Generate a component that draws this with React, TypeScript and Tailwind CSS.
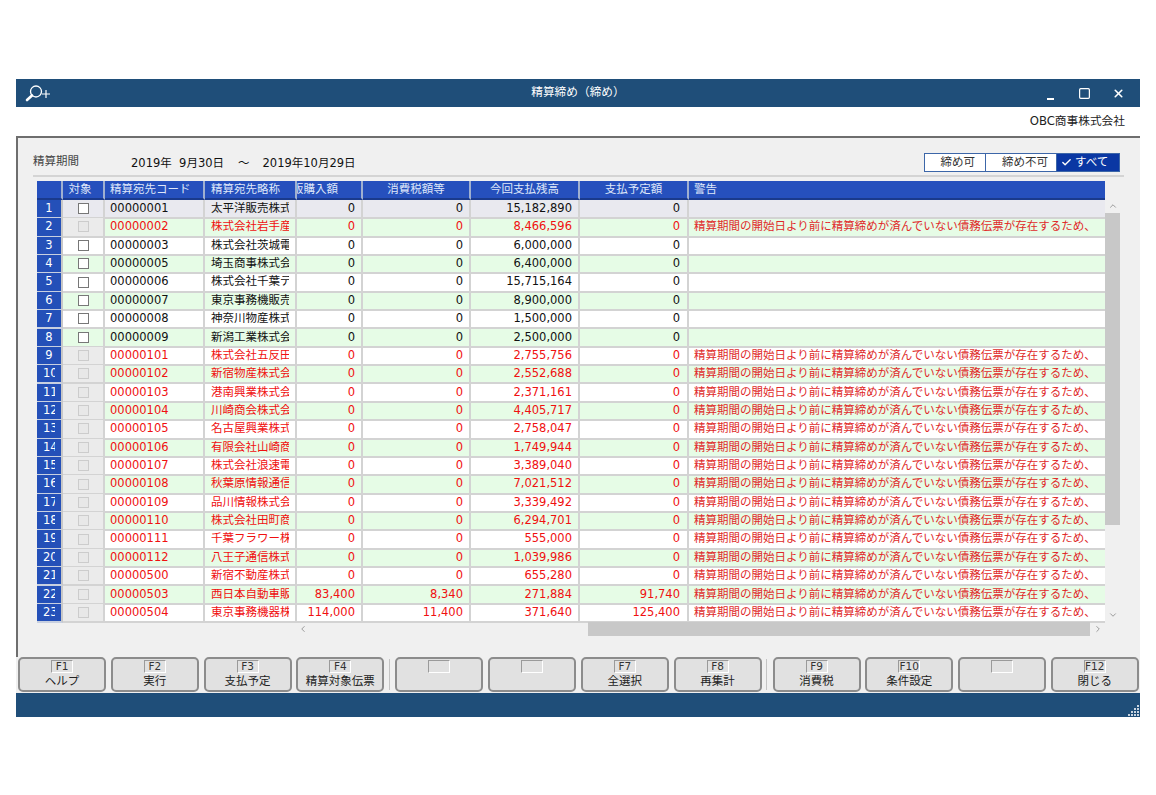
import { Check, ChevronDown, ChevronLeft, ChevronRight, ChevronUp, Square, X } from "lucide-react";

const warning = "精算期間の開始日より前に精算締めが済んでいない債務伝票が存在するため、";

const rows = [
  { code: "00000001", name: "太平洋販売株式会社", buy: "0", tax: "0", balance: "15,182,890", plan: "0", locked: false },
  { code: "00000002", name: "株式会社岩手産業", buy: "0", tax: "0", balance: "8,466,596", plan: "0", locked: true },
  { code: "00000003", name: "株式会社茨城電機", buy: "0", tax: "0", balance: "6,000,000", plan: "0", locked: false },
  { code: "00000005", name: "埼玉商事株式会社", buy: "0", tax: "0", balance: "6,400,000", plan: "0", locked: false },
  { code: "00000006", name: "株式会社千葉テック", buy: "0", tax: "0", balance: "15,715,164", plan: "0", locked: false },
  { code: "00000007", name: "東京事務機販売株式", buy: "0", tax: "0", balance: "8,900,000", plan: "0", locked: false },
  { code: "00000008", name: "神奈川物産株式会社", buy: "0", tax: "0", balance: "1,500,000", plan: "0", locked: false },
  { code: "00000009", name: "新潟工業株式会社", buy: "0", tax: "0", balance: "2,500,000", plan: "0", locked: false },
  { code: "00000101", name: "株式会社五反田商事", buy: "0", tax: "0", balance: "2,755,756", plan: "0", locked: true },
  { code: "00000102", name: "新宿物産株式会社", buy: "0", tax: "0", balance: "2,552,688", plan: "0", locked: true },
  { code: "00000103", name: "港南興業株式会社", buy: "0", tax: "0", balance: "2,371,161", plan: "0", locked: true },
  { code: "00000104", name: "川崎商会株式会社", buy: "0", tax: "0", balance: "4,405,717", plan: "0", locked: true },
  { code: "00000105", name: "名古屋興業株式会社", buy: "0", tax: "0", balance: "2,758,047", plan: "0", locked: true },
  { code: "00000106", name: "有限会社山崎商店", buy: "0", tax: "0", balance: "1,749,944", plan: "0", locked: true },
  { code: "00000107", name: "株式会社浪速電機", buy: "0", tax: "0", balance: "3,389,040", plan: "0", locked: true },
  { code: "00000108", name: "秋葉原情報通信株式", buy: "0", tax: "0", balance: "7,021,512", plan: "0", locked: true },
  { code: "00000109", name: "品川情報株式会社", buy: "0", tax: "0", balance: "3,339,492", plan: "0", locked: true },
  { code: "00000110", name: "株式会社田町商事", buy: "0", tax: "0", balance: "6,294,701", plan: "0", locked: true },
  { code: "00000111", name: "千葉フラワー株式会社", buy: "0", tax: "0", balance: "555,000", plan: "0", locked: true },
  { code: "00000112", name: "八王子通信株式会社", buy: "0", tax: "0", balance: "1,039,986", plan: "0", locked: true },
  { code: "00000500", name: "新宿不動産株式会社", buy: "0", tax: "0", balance: "655,280", plan: "0", locked: true },
  { code: "00000503", name: "西日本自動車販売株式", buy: "83,400", tax: "8,340", balance: "271,884", plan: "91,740", locked: true },
  { code: "00000504", name: "東京事務機器株式会社", buy: "114,000", tax: "11,400", balance: "371,640", plan: "125,400", locked: true },
];

const keyGroups = [
  [
    { key: "F1", label: "ヘルプ" },
    { key: "F2", label: "実行" },
    { key: "F3", label: "支払予定" },
    { key: "F4", label: "精算対象伝票" },
  ],
  [
    { key: "", label: "" },
    { key: "", label: "" },
    { key: "F7", label: "全選択" },
    { key: "F8", label: "再集計" },
  ],
  [
    { key: "F9", label: "消費税" },
    { key: "F10", label: "条件設定" },
    { key: "", label: "" },
    { key: "F12", label: "閉じる" },
  ],
];

const gridCols = "grid grid-cols-[26px_42px_100px_92px_66px_108px_109px_109px_416px]";
const cell = "flex items-center overflow-hidden whitespace-nowrap border-r-2 border-b-2 border-[#d3d3d3]";
const headCell = "flex items-center overflow-hidden whitespace-nowrap border-r-2 border-b-2 border-r-[#9fb0d0] border-b-[#1a3a8c]";

function FunctionKey({ k, label }: { k: string; label: string }) {
  return (
    <button className="flex h-[35px] w-[88px] flex-col items-center rounded-[5px] border-2 border-[#8c8c8c] bg-[#e1e1e1] pt-[1px]">
      <span className="flex h-[13px] w-[22px] items-center justify-center border-t border-l border-t-[#9a9a9a] border-l-[#9a9a9a] border-r border-b border-r-white border-b-white text-[10.5px] leading-none text-[#333]">
        {k}
      </span>
      <span className="mt-[1px] text-[11.5px] leading-[14px] text-[#222]">{label}</span>
    </button>
  );
}

export default function App() {
  return (
    <div
      className="h-[795px] w-[1156px] overflow-hidden bg-white pt-[79px] pl-[16px] text-[11.5px] text-black"
      style={{ fontFamily: '"DejaVu Sans", "Noto Sans CJK JP", sans-serif' }}
    >
      <div className="flex h-[638px] w-[1124px] flex-col">
        {/* Title bar */}
        <div className="flex h-[28px] items-center bg-[#1f4e79] text-white">
          <div className="flex w-[100px] pl-[8px]">
            <svg width="28" height="18" viewBox="0 0 28 18" fill="none" stroke="#ffffff">
              <circle cx="12" cy="7.5" r="5.5" strokeWidth="1.3" />
              <path d="M8 11.5 L3 16" strokeWidth="2.6" strokeLinecap="round" />
              <path d="M18 10 H26 M22 6 V14" strokeWidth="1.2" />
            </svg>
          </div>
          <div className="flex-1 text-center text-[11.7px]">精算締め（締め）</div>
          <div className="flex w-[100px] items-center justify-end gap-[21px] pr-[15px]">
            <span className="flex h-[13px] w-[13px] items-end justify-center">
              <span className="h-[2px] w-[7px] bg-white" />
            </span>
            <Square className="h-[13px] w-[13px]" strokeWidth={2.2} />
            <X className="h-[13px] w-[13px]" strokeWidth={3} />
          </div>
        </div>

        {/* Company strip */}
        <div className="flex h-[31px] items-center justify-end border-b-2 border-[#6e6e6e] pr-[15px] text-[11.7px] text-[#222]">
          OBC商事株式会社
        </div>

        {/* Body */}
        <div className="flex h-[519px] flex-col border-l-2 border-[#6e6e6e] bg-[#f0f0f0]">
          <div className="ml-[15px] mr-[16px] mt-[13px] flex h-[26px] items-start border-b-2 border-[#d4d4d4]">
            <span className="mt-[2px] w-[98px] text-[11.5px] text-[#444]">精算期間</span>
            <span className="mt-[4px] flex whitespace-pre text-[11.5px] text-[#111]">
              <span>2019年  9月30日</span>
              <span className="ml-[14px]">～</span>
              <span className="ml-[13px]">2019年10月29日</span>
            </span>
            <div className="ml-auto mt-[2px] mr-[4px] flex h-[18.5px] w-[196px] border border-[#3c66a8] bg-white text-[11.5px] text-[#333]">
              <span className="flex w-[61px] items-center justify-end border-r border-[#3c66a8] pr-[10px]">締め可</span>
              <span className="flex w-[71px] items-center justify-end border-r border-[#3c66a8] pr-[8px]">締め不可</span>
              <span className="flex flex-1 items-center gap-[3px] bg-[#0a37a3] pl-[4px] text-white">
                <Check className="h-[11px] w-[11px]" strokeWidth={3} />
                すべて
              </span>
            </div>
          </div>

          <div className="ml-[19px] mt-[4px] flex">
            {/* Grid */}
            <div className="w-[1068px]">
              <div className={`${gridCols} h-[19px] bg-[#2650bd] text-[#dfe7fa]`}>
                <div className={headCell} />
                <div className={`${headCell} justify-center pr-[6px]`}>対象</div>
                <div className={`${headCell} pl-[5px]`}>精算宛先コード</div>
                <div className={`${headCell} pl-[6px]`}>精算宛先略称</div>
                <div className={`${headCell} justify-end pr-[23px]`}>今回販購入額</div>
                <div className={`${headCell} justify-center`}>消費税額等</div>
                <div className={`${headCell} justify-center`}>今回支払残高</div>
                <div className={`${headCell} justify-center`}>支払予定額</div>
                <div className="flex items-center border-b-2 border-b-[#1a3a8c] pl-[5px]">警告</div>
              </div>
              {rows.map((row, i) => {
                const bg = i === 0 ? "bg-[#e9e9ef]" : i % 2 === 1 ? "bg-[#e6fce6]" : "bg-white";
                const color = row.locked ? "text-[#f01010]" : "text-[#111]";
                return (
                  <div key={row.code} className={`${gridCols} h-[18.36px] ${bg} ${color}`}>
                    <div className="flex items-center justify-center border-r-2 border-b-2 border-r-[#c8c8c8] border-b-[#c8d0e0] bg-[#2450b8] text-white">
                      <span className="inline-block w-[12px] overflow-hidden whitespace-nowrap text-center">{i + 1}</span>
                    </div>
                    <div className={`${cell} justify-center ${row.locked ? "bg-[#ebebeb]" : ""}`}>
                      <span className={`h-[11px] w-[11px] border ${row.locked ? "border-[#cccccc] bg-[#e8e8e8]" : "border-[#777777] bg-white"}`} />
                    </div>
                    <div className={`${cell} pl-[5px]`}>{row.code}</div>
                    <div className={`${cell} pl-[6px]`}>
                      <span className="block w-[78px] overflow-hidden">{row.name}</span>
                    </div>
                    <div className={`${cell} justify-end pr-[6px]`}>{row.buy}</div>
                    <div className={`${cell} justify-end pr-[6px]`}>{row.tax}</div>
                    <div className={`${cell} justify-end pr-[6px]`}>{row.balance}</div>
                    <div className={`${cell} justify-end pr-[7px]`}>{row.plan}</div>
                    <div className="flex items-center overflow-hidden whitespace-nowrap border-b-2 border-[#d3d3d3] pl-[5px] text-[#e02a2a]">
                      {row.locked ? warning : ""}
                    </div>
                  </div>
                );
              })}
            </div>

            {/* Vertical scrollbar */}
            <div className="flex w-[15px] flex-col items-center pt-[20px]">
              <ChevronUp className="h-[10px] w-[10px] text-[#8a8a8a]" />
              <div className="mt-[2px] h-[312px] w-full bg-[#c8c8c8]" />
              <ChevronDown className="mt-[85px] h-[10px] w-[10px] text-[#8a8a8a]" />
            </div>
          </div>

          {/* Horizontal scrollbar */}
          <div className="ml-[280px] flex h-[14px] items-center">
            <ChevronLeft className="h-[10px] w-[10px] text-[#8a8a8a]" />
            <div className="ml-[280px] h-full w-[502px] bg-[#c8c8c8]" />
            <ChevronRight className="ml-[3px] h-[10px] w-[10px] text-[#8a8a8a]" />
          </div>
        </div>

        {/* Function keys */}
        <div className="flex h-[36px] items-start bg-[#f0f0f0] pl-[2px]">
          {keyGroups.map((group, g) => (
            <div key={g} className="flex items-start">
              {g > 0 && <div className="mt-[2px] ml-[4.75px] mr-[5.25px] h-[31px] w-px bg-[#c4c4c4]" />}
              <div className="flex gap-[4.75px]">
                {group.map((b, i) => (
                  <FunctionKey key={i} k={b.key} label={b.label} />
                ))}
              </div>
            </div>
          ))}
        </div>

        {/* Status bar */}
        <div className="flex h-[24px] items-end justify-end bg-[#1f4e79] pr-[1px] pb-[1px]">
          <svg width="11" height="11" viewBox="0 0 11 11" fill="#c8d4e0">
            <rect x="9" y="0" width="2" height="2" />
            <rect x="6" y="3" width="2" height="2" />
            <rect x="9" y="3" width="2" height="2" />
            <rect x="3" y="6" width="2" height="2" />
            <rect x="6" y="6" width="2" height="2" />
            <rect x="9" y="6" width="2" height="2" />
            <rect x="0" y="9" width="2" height="2" />
            <rect x="3" y="9" width="2" height="2" />
            <rect x="6" y="9" width="2" height="2" />
            <rect x="9" y="9" width="2" height="2" />
          </svg>
        </div>
      </div>
    </div>
  );
}
